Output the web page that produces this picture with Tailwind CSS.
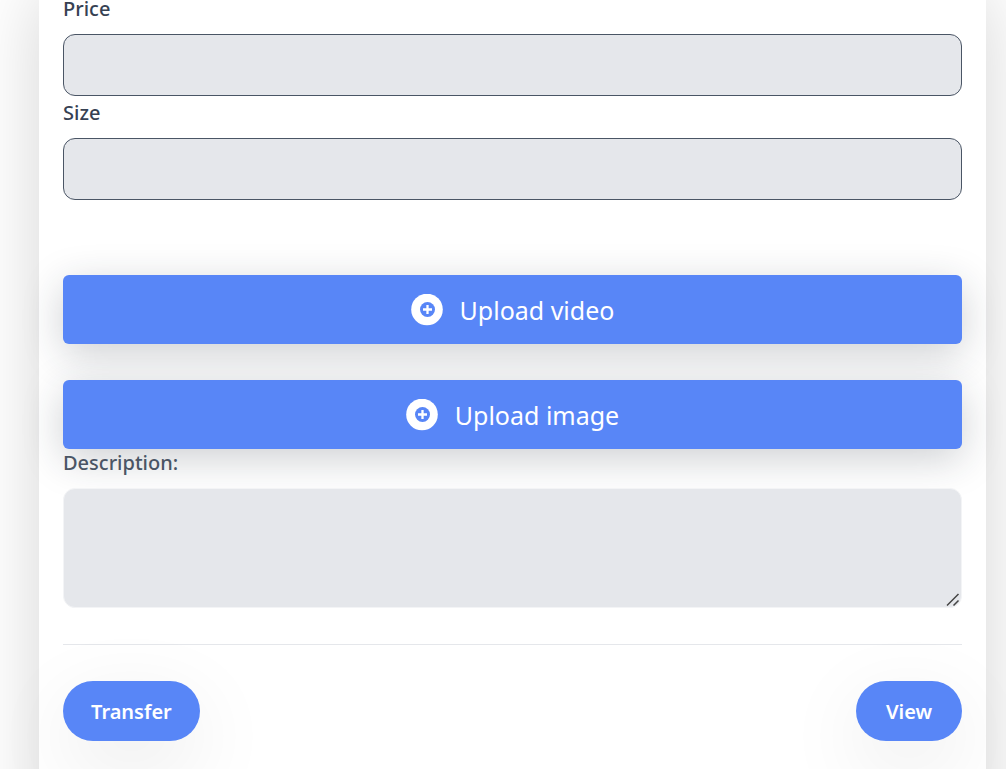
<!DOCTYPE html>
<html lang="en">
<head>
<meta charset="utf-8">
<meta name="viewport" content="width=device-width, initial-scale=1">
<title>Listing details</title>
<script src="https://cdn.jsdelivr.net/npm/@tailwindcss/browser@4"></script>
</head>
<body class="h-screen overflow-hidden bg-white pl-[39px] pr-5 font-['Noto_Sans','Open_Sans',sans-serif]">
<main class="-mt-2 min-h-[120vh] bg-white px-6 shadow-[0_0_70px_rgba(0,0,0,0.17)]">
  <form class="flex flex-col">
    <label for="price" class="mb-2 text-[20px] leading-[34px] font-medium text-gray-700">Price</label>
    <input id="price" type="text" class="h-[62px] w-full rounded-xl border border-gray-600 bg-gray-200 px-4 text-xl text-gray-700">
    <label for="size" class="mb-2 text-[20px] leading-[34px] font-medium text-gray-700">Size</label>
    <input id="size" type="text" class="h-[62px] w-full rounded-xl border border-gray-600 bg-gray-200 px-4 text-xl text-gray-700">

    <div class="mt-[75px] flex flex-col gap-9">
      <button type="button" class="flex h-[69px] w-full items-center justify-center gap-[17px] rounded-md bg-[#5886f7] text-[25px] text-white shadow-[0_10px_40px_rgba(31,41,55,0.22)]">
        <svg class="h-8 w-8" viewBox="0 0 32 32" aria-hidden="true"><circle cx="16" cy="15.5" r="15.8" fill="#fff"/><circle cx="16.5" cy="15.5" r="7.5" fill="#5886f7"/><path d="M16.5 11v9M12 15.5h9" stroke="#fff" stroke-width="2.3"/></svg>
        <span class="pt-0.5">Upload video</span>
      </button>
      <button type="button" class="flex h-[69px] w-full items-center justify-center gap-[17px] rounded-md bg-[#5886f7] text-[25px] text-white shadow-[0_10px_40px_rgba(31,41,55,0.22)]">
        <svg class="h-8 w-8" viewBox="0 0 32 32" aria-hidden="true"><circle cx="16" cy="15.5" r="15.8" fill="#fff"/><circle cx="16.5" cy="15.5" r="7.5" fill="#5886f7"/><path d="M16.5 11v9M12 15.5h9" stroke="#fff" stroke-width="2.3"/></svg>
        <span class="pt-0.5">Upload image</span>
      </button>
    </div>

    <label for="description" class="mb-[11px] text-[20px] leading-7 font-medium text-gray-600">Description:</label>
    <div class="relative flex">
      <textarea id="description" class="h-[120px] w-full resize rounded-xl border border-gray-100 bg-gray-200 px-4 py-2 text-xl text-gray-700 [&::-webkit-resizer]:bg-transparent"></textarea>
      <svg class="pointer-events-none absolute right-0.5 bottom-px h-[14px] w-[14px]" viewBox="0 0 14 14" fill="none" stroke="#444" stroke-width="1.5" aria-hidden="true"><path d="M1 12.500 12.500 1M7.500 12.500 12.500 7.500"/></svg>
    </div>

    <hr class="mt-9 border-gray-200">
    <div class="mt-9 flex items-center justify-between">
      <button type="button" class="h-[60px] min-w-[106px] rounded-full bg-[#5886f7] px-7 pt-0.5 text-[20px] font-semibold text-white shadow-[0_25px_85px_rgba(0,0,0,0.09)]">Transfer</button>
      <button type="button" class="h-[60px] min-w-[106px] rounded-full bg-[#5886f7] px-7 pt-0.5 text-[20px] font-semibold text-white shadow-[0_25px_85px_rgba(0,0,0,0.09)]">View</button>
    </div>
  </form>
</main>
</body>
</html>
